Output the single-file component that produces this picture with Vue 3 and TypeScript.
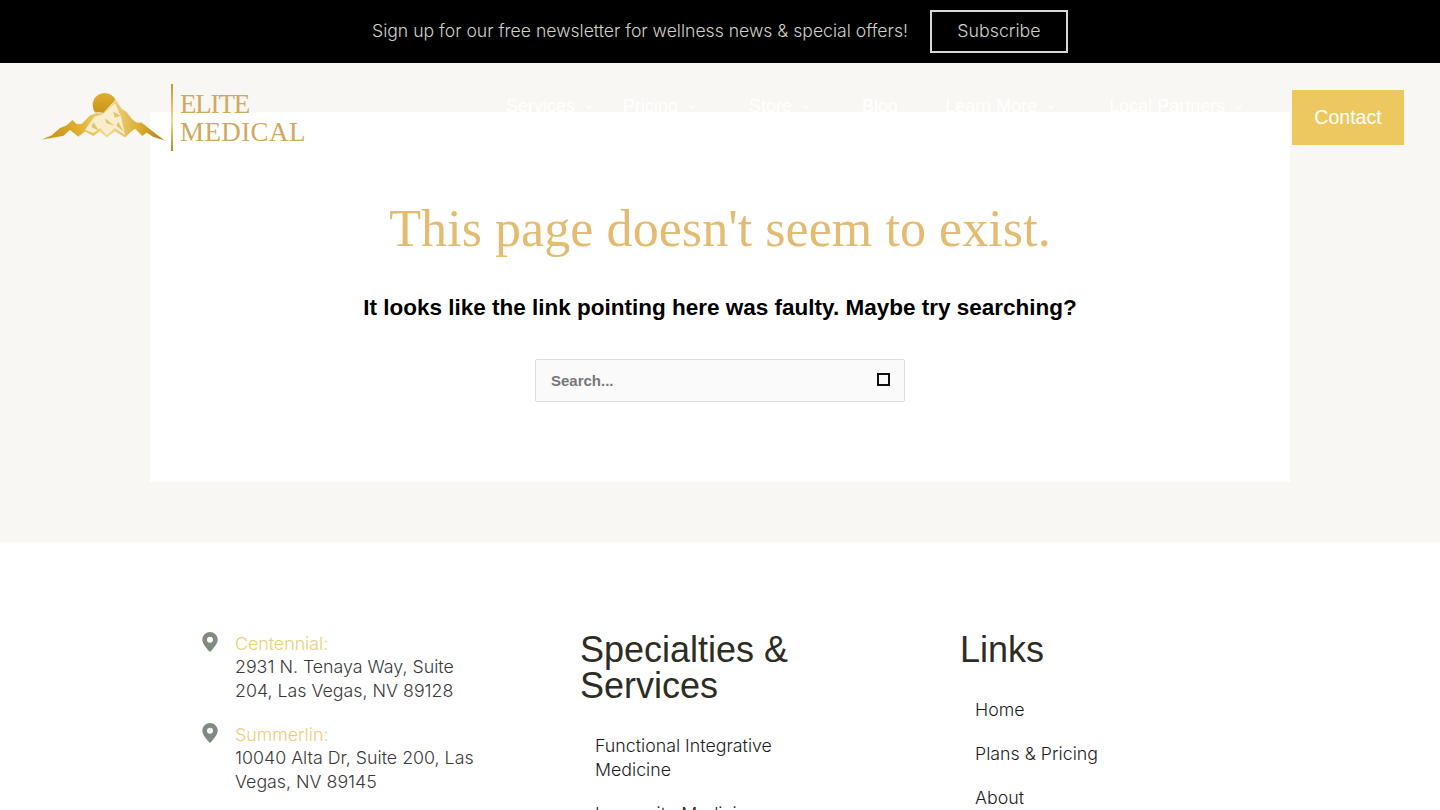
<script setup lang="ts">
const nav = [
  { label: "Services", caret: true, gap: 30 },
  { label: "Pricing", caret: true, gap: 53 },
  { label: "Store", caret: true, gap: 52 },
  { label: "Blog", caret: false, gap: 47 },
  { label: "Learn More", caret: true, gap: 54 },
  { label: "Local Partners", caret: true, gap: 0 },
];

const locations = [
  { name: "Centennial:", lines: ["2931 N. Tenaya Way, Suite", "204, Las Vegas, NV 89128"] },
  { name: "Summerlin:", lines: ["10040 Alta Dr, Suite 200, Las", "Vegas, NV 89145"] },
];

const services = ["Functional Integrative Medicine", "Longevity Medicine", "Hormone Therapy"];
const links = ["Home", "Plans & Pricing", "About", "Contact"];
</script>

<template>
  <div class="promo">
    <span class="promo-text">Sign up for our free newsletter for wellness news &amp; special offers!</span>
    <a class="promo-btn">Subscribe</a>
  </div>

  <div class="page">
    <header class="site-header">
      <div class="logo">
        <svg class="logo-mark" width="136" height="62" viewBox="0 0 408 186">
          <defs>
            <linearGradient id="gold" x1="0" y1="0" x2="1" y2="0">
              <stop offset="0" stop-color="#b98a16" />
              <stop offset="0.3" stop-color="#e0b02c" />
              <stop offset="0.55" stop-color="#f0d98e" />
              <stop offset="0.8" stop-color="#d9ac2e" />
              <stop offset="1" stop-color="#a97c12" />
            </linearGradient>
            <linearGradient id="sun" x1="0" y1="0" x2="0" y2="1">
              <stop offset="0" stop-color="#e0ae30" />
              <stop offset="1" stop-color="#c58f14" />
            </linearGradient>
          </defs>
          <circle cx="209" cy="60" r="36" fill="url(#sun)" />
          <path
            d="M15 165L50 150L75 128L95 120L112 104L125 116L140 116L165 90L188 82L205 85L243 44L262 72L275 80L292 102L305 112L320 112L345 132L392 168L355 157L335 144L322 154L300 132L285 144L270 158L240 140L215 158L195 140L175 154L150 140L130 156L105 136L85 154L60 158Z"
            fill="url(#gold)"
            stroke="#f8f7f3"
            stroke-width="2"
          />
          <path d="M150 135L178 95L205 88L240 55L258 95L270 150L240 130L215 150L195 130L175 145Z" fill="#f8eecb" />
          <path d="M235 80l22 12-18 6zM210 100l28 22-24-8zM250 110l16 30-22-18zM175 112l18 26-24-12z" fill="#e3c270" />
        </svg>
        <span class="logo-rule"></span>
        <span class="logo-text">
          <span class="logo-elite">ELITE</span>
          <span class="logo-medical">MEDICAL</span>
        </span>
      </div>

      <nav class="site-nav">
        <a v-for="item in nav" :key="item.label" class="nav-item" :style="{ marginRight: item.gap + 'px' }">
          {{ item.label }}
          <svg v-if="item.caret" class="caret" width="8" height="6" viewBox="0 0 8 6">
            <path d="M1 1.500l3 3 3-3" fill="none" stroke="#fff" stroke-width="1.3" />
          </svg>
        </a>
      </nav>

      <a class="contact-btn">Contact</a>
    </header>

    <main class="card">
      <h1>This page doesn't seem to exist.</h1>
      <p class="lead">It looks like the link pointing here was faulty. Maybe try searching?</p>
      <div class="search">
        <span class="search-text">Search...</span>
        <span class="search-icon"></span>
      </div>
    </main>
  </div>

  <footer class="footer">
    <section class="col">
      <div v-for="loc in locations" :key="loc.name" class="location">
        <svg class="pin" width="16" height="20" viewBox="0 0 16 20">
          <path
            fill-rule="evenodd"
            d="M8 0a7.700 7.700 0 0 1 7.700 7.700c0 3.800-4.300 8.800-7.700 12.300C4.600 16.500.3 11.500.3 7.700A7.700 7.700 0 0 1 8 0zm0 4.700a3 3 0 1 0 0 6 3 3 0 0 0 0-6z"
            fill="#7f8a80"
          />
        </svg>
        <div class="address">
          <div class="loc-name">{{ loc.name }}</div>
          <div v-for="line in loc.lines" :key="line">{{ line }}</div>
        </div>
      </div>
    </section>

    <section class="col">
      <h2>Specialties &amp; Services</h2>
      <ul class="menu">
        <li v-for="s in services" :key="s">{{ s }}</li>
      </ul>
    </section>

    <section class="col">
      <h2>Links</h2>
      <ul class="menu">
        <li v-for="l in links" :key="l">{{ l }}</li>
      </ul>
    </section>
  </footer>
</template>

<style>
html,
body {
  margin: 0;
  background: #fff;
}
</style>

<style scoped>
.promo {
  height: 63px;
  background: #000;
  display: flex;
  align-items: center;
  justify-content: center;
  gap: 22px;
  font-family: Inter, "Liberation Sans", Arial, sans-serif;
  font-weight: 300;
  color: #d0d0cc;
  font-size: 17.6px;
  box-sizing: border-box;
}

.promo-text {
  margin-bottom: 2px;
}

.promo-btn {
  width: 138px;
  height: 43px;
  box-sizing: border-box;
  border: 2px solid #d8d8d4;
  display: flex;
  align-items: center;
  justify-content: center;
  font-size: 17.8px;
  padding-bottom: 2px;
}

.page {
  position: relative;
  background: #f8f7f3;
  padding: 49px 150px 60px;
}

.site-header {
  position: absolute;
  top: 0;
  left: 0;
  right: 0;
  height: 109px;
  font-family: "Liberation Sans", Arial, sans-serif;
}

.logo {
  position: absolute;
  left: 35px;
  top: 21px;
  display: flex;
  height: 67px;
}

.logo-mark {
  margin-top: 1px;
}

.logo-rule {
  width: 2px;
  height: 67px;
  background: linear-gradient(#c9952e, #f3d98a 55%, #b98a1c);
}

.logo-text {
  display: flex;
  flex-direction: column;
  justify-content: center;
  margin-left: 7px;
  color: #cfa95e;
  font-family: "Liberation Serif", "Times New Roman", serif;
  line-height: 28px;
}

.logo-elite {
  font-size: 27px;
  letter-spacing: -1.2px;
}

.logo-medical {
  font-size: 27px;
  letter-spacing: 0.4px;
}

.site-nav {
  position: absolute;
  left: 506px;
  top: 32px;
  display: flex;
  white-space: nowrap;
}

.nav-item {
  color: #fff;
  font-size: 18px;
  line-height: 22px;
  display: flex;
  align-items: center;
}

.caret {
  margin-left: 10px;
  margin-top: 2px;
}

.contact-btn {
  position: absolute;
  left: 1292px;
  top: 27px;
  width: 112px;
  height: 55px;
  background: #ecc85f;
  color: #fff;
  font-size: 19.6px;
  display: flex;
  align-items: center;
  justify-content: center;
}

.card {
  background: #fff;
  height: 370px;
  box-sizing: border-box;
  padding-top: 87px;
  text-align: center;
}

h1 {
  margin: 0;
  font-family: "Liberation Serif", "Times New Roman", serif;
  font-weight: 400;
  font-size: 52px;
  line-height: 60px;
  letter-spacing: 0.07px;
  color: #e3bb71;
}

.lead {
  margin: 34px 0 0;
  font-family: "Liberation Sans", Arial, sans-serif;
  font-weight: 700;
  font-size: 22.5px;
  line-height: 30px;
  color: #000;
}

.search {
  width: 370px;
  height: 43px;
  margin: 36px auto 0;
  box-sizing: border-box;
  background: #fafafa;
  border: 1px solid #dcdcdc;
  border-radius: 2px;
  padding: 0 15px;
  display: flex;
  align-items: center;
  justify-content: space-between;
}

.search-text {
  font-family: "Liberation Sans", Arial, sans-serif;
  font-weight: 700;
  font-size: 15px;
  color: #777;
}

.search-icon {
  width: 13px;
  height: 13px;
  box-sizing: border-box;
  border: 2px solid #111;
  margin-top: -3px;
  margin-right: -1px;
}

.footer {
  display: grid;
  grid-template-columns: repeat(3, 380px);
  padding: 88px 100px 60px 200px;
  font-family: Inter, "Liberation Sans", Arial, sans-serif;
  font-weight: 300;
  background: #fff;
}

.location {
  display: flex;
  gap: 17px;
  margin-bottom: 18px;
  width: 300px;
}

.pin {
  flex: none;
  margin-top: 2px;
  margin-left: 2px;
}

.address {
  font-size: 17.8px;
  line-height: 24px;
  color: #3a3a3a;
}

.loc-name {
  color: #e9cf78;
  line-height: 22px;
  margin-top: 3px;
}

h2 {
  margin: 2px 0 0;
  font-family: "Liberation Sans", Arial, sans-serif;
  font-weight: 400;
  font-size: 36px;
  line-height: 36px;
  color: #2d2d24;
  width: 260px;
}

.menu {
  list-style: none;
  margin: 30px 0 0;
  padding: 0 0 0 15px;
  width: 220px;
  font-size: 17.8px;
  line-height: 24px;
  color: #1c1c1c;
}

.menu li {
  margin-bottom: 20px;
}
</style>
